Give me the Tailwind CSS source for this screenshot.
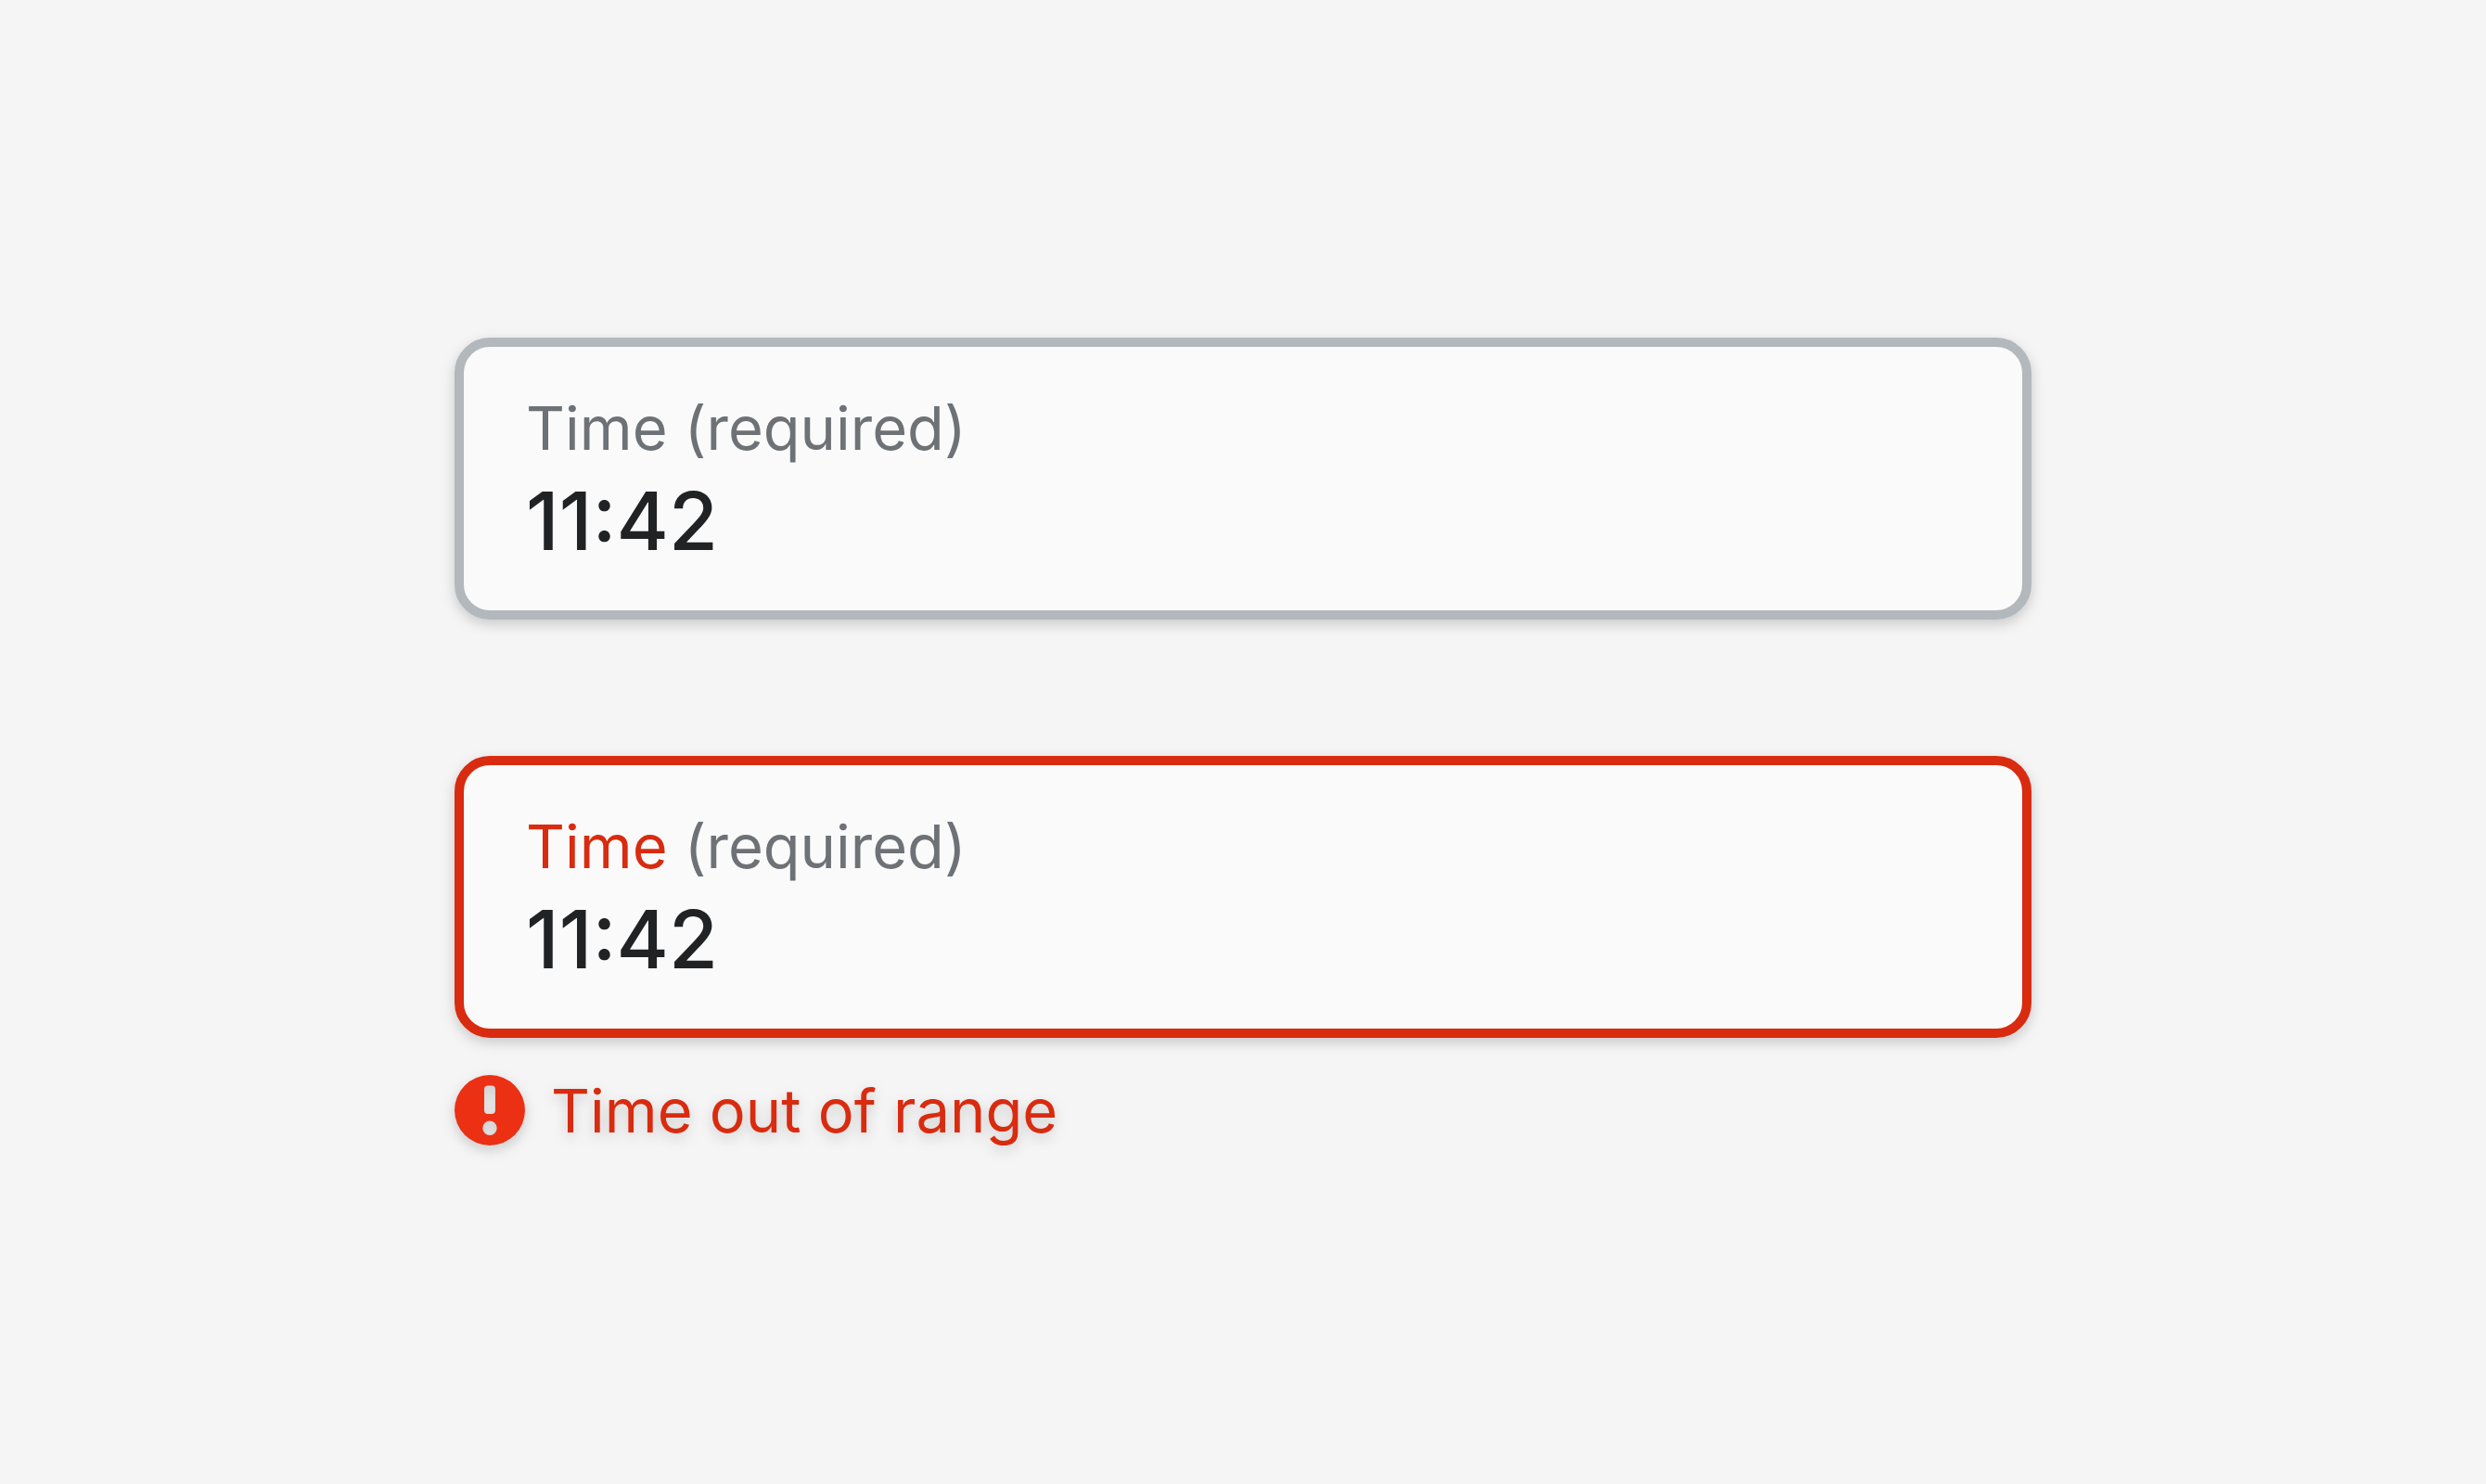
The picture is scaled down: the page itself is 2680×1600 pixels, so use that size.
<!DOCTYPE html>
<html lang="en">
<head>
<meta charset="utf-8">
<meta name="viewport" content="width=device-width, initial-scale=1">
<title>Time field</title>
<script src="https://cdn.jsdelivr.net/npm/@tailwindcss/browser@4"></script>
</head>
<body class="bg-[#f5f5f5] font-['Inter',sans-serif]">
<main class="mx-auto flex min-h-screen w-full max-w-[1700px] flex-col justify-center gap-[147px] pt-px drop-shadow-[0_5px_7px_rgba(0,0,0,0.18)]">
  <div class="rounded-[38px] border-[10px] border-[#b3b8bd] bg-[#fafafa] px-[67px] pt-12 pb-[46px]">
    <label for="time" class="block text-[65px] leading-[80px] text-[#6e7175]">Time <span>(required)</span></label>
    <input id="time" type="text" value="11:42" required class="mt-[10px] block h-[100px] w-full bg-transparent text-[86px] leading-[100px] font-medium text-[#212224] outline-none">
  </div>
  <div>
    <div class="rounded-[38px] border-[10px] border-[#d92b0f] bg-[#fafafa] px-[67px] pt-12 pb-[46px]">
      <label for="time-error" class="block text-[65px] leading-[80px] text-[#d92b0f]">Time <span class="text-[#6e7175]">(required)</span></label>
      <input id="time-error" type="text" value="11:42" required aria-invalid="true" aria-describedby="time-message" class="mt-[10px] block h-[100px] w-full bg-transparent text-[86px] leading-[100px] font-medium text-[#212224] outline-none">
    </div>
    <p id="time-message" class="mt-10 flex gap-7 text-[65px] leading-[78px] text-[#d92b0f]">
      <svg class="size-[76px] shrink-0" viewBox="0 0 76 76" aria-hidden="true"><path fill="#ec3013" fill-rule="evenodd" d="M38 0a38 38 0 1 1 0 76a38 38 0 0 1 0-76ZM36 11.500a4 4 0 0 0-4 4V38a4 4 0 0 0 4 4h4a4 4 0 0 0 4-4V15.500a4 4 0 0 0-4-4ZM38 49.500a7.700 7.700 0 1 0 0 15.400a7.700 7.700 0 0 0 0-15.400Z"/></svg>
      <span>Time out of range</span>
    </p>
  </div>
</main>
</body>
</html>
